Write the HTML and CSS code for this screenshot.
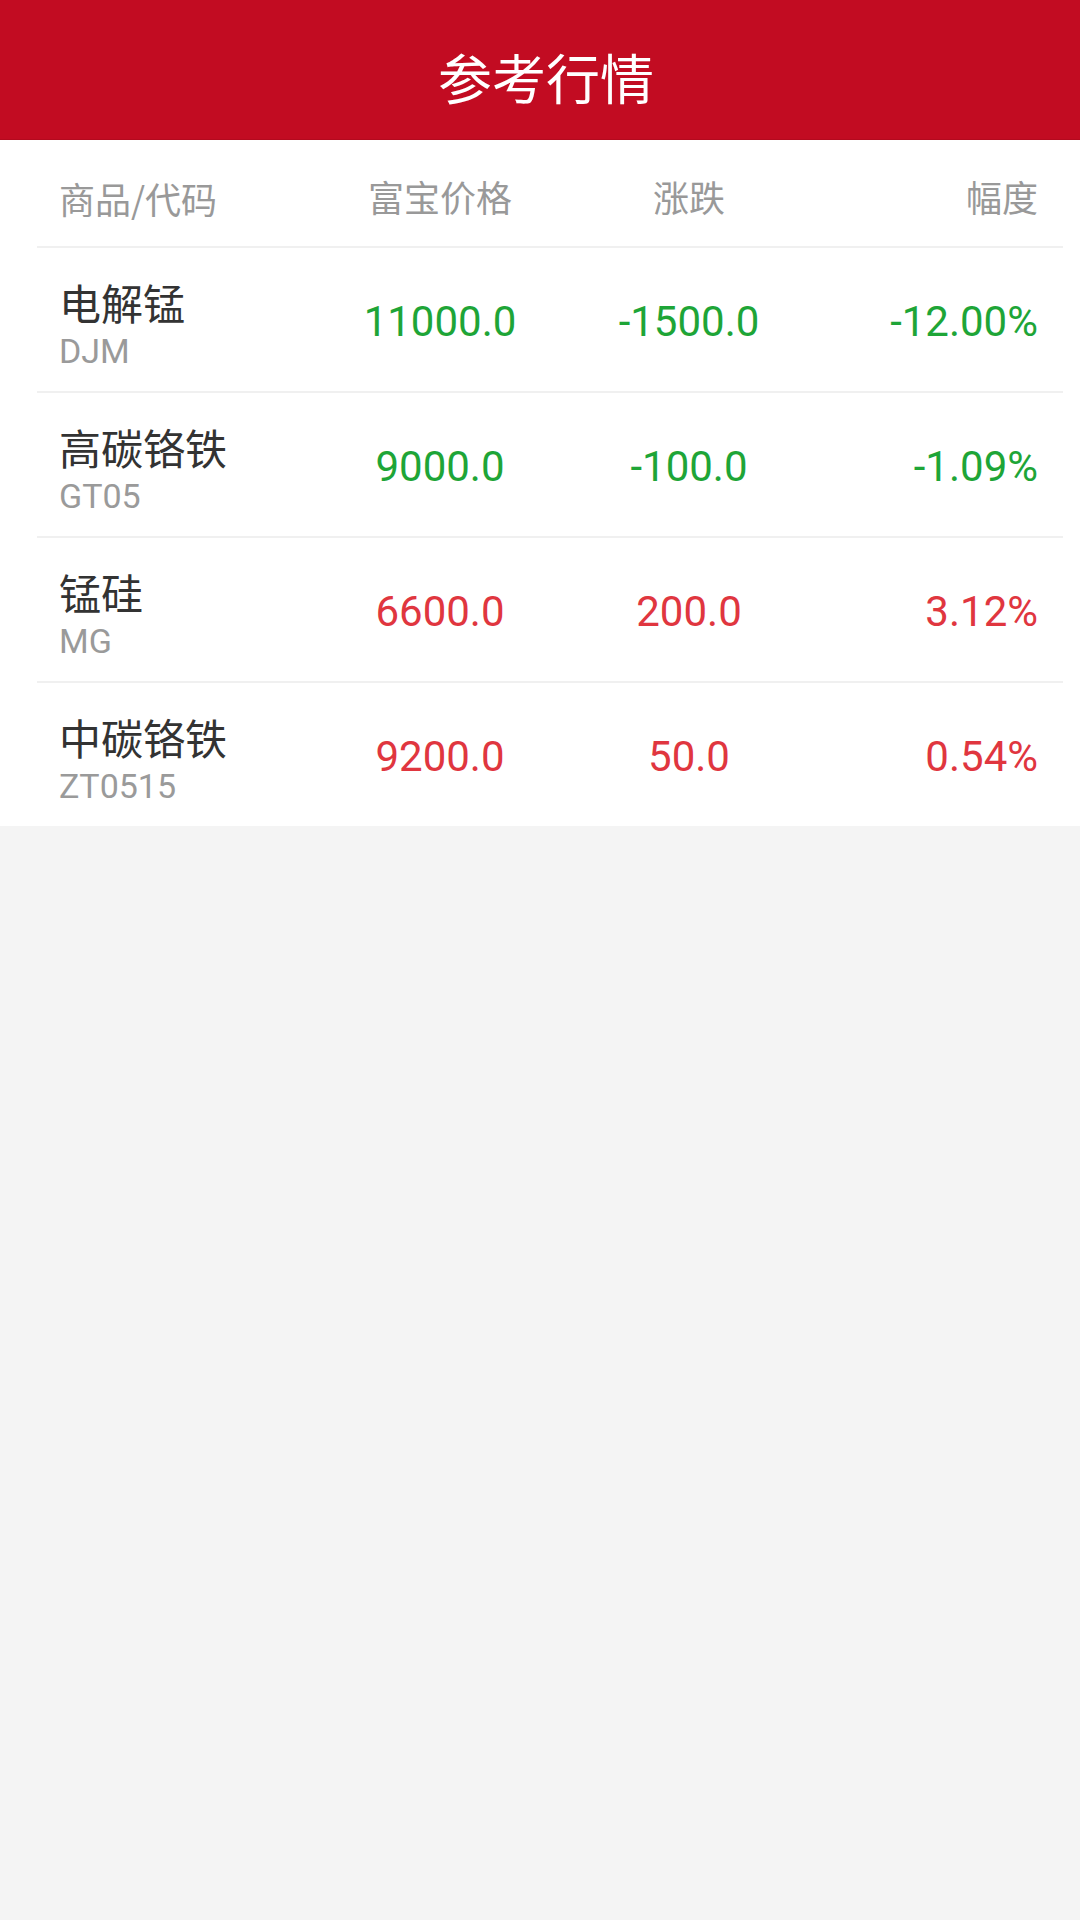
FILE: index.html
```html
<!doctype html>
<html lang="zh-CN">
  <head>
    <meta charset="utf-8">
    <meta name="viewport" content="width=device-width, initial-scale=1">
    <title>参考行情</title>
    <link rel="stylesheet" href="styles.css">
  </head>
  <body>
    <header class="topbar">
      <h1 class="topbar-title">参考行情</h1>
    </header>

    <main class="quotes">
      <div class="quote-row quote-head">
        <div class="col-name">商品/代码</div>
        <div class="col-price">富宝价格</div>
        <div class="col-change">涨跌</div>
        <div class="col-pct">幅度</div>
      </div>

      <div class="quote-row down">
        <div class="col-name">
          <div class="name">电解锰</div>
          <div class="code">DJM</div>
        </div>
        <div class="col-price num">11000.0</div>
        <div class="col-change num">-1500.0</div>
        <div class="col-pct num">-12.00%</div>
      </div>

      <div class="quote-row down">
        <div class="col-name">
          <div class="name">高碳铬铁</div>
          <div class="code">GT05</div>
        </div>
        <div class="col-price num">9000.0</div>
        <div class="col-change num">-100.0</div>
        <div class="col-pct num">-1.09%</div>
      </div>

      <div class="quote-row up">
        <div class="col-name">
          <div class="name">锰硅</div>
          <div class="code">MG</div>
        </div>
        <div class="col-price num">6600.0</div>
        <div class="col-change num">200.0</div>
        <div class="col-pct num">3.12%</div>
      </div>

      <div class="quote-row up last">
        <div class="col-name">
          <div class="name">中碳铬铁</div>
          <div class="code">ZT0515</div>
        </div>
        <div class="col-price num">9200.0</div>
        <div class="col-change num">50.0</div>
        <div class="col-pct num">0.54%</div>
      </div>
    </main>
  </body>
</html>
```

FILE: styles.css
```css
body {
  margin: 0;
  background: #f4f4f4;
  font-family: Roboto, "Noto Sans CJK SC", sans-serif;
}
.topbar {
  height: 140px;
  background: #c20c22;
  border-bottom: 1px solid #b30a1e;
  box-sizing: border-box;
  display: flex;
  align-items: center;
  justify-content: center;
}
.topbar-title {
  margin: 0;
  padding: 14px 0 0 12px;
  color: #fff;
  font-family: "Noto Sans CJK SC", sans-serif;
  font-size: 54px;
  font-weight: 400;
  line-height: 1;
}
.quotes {
  background: #fff;
  padding: 0 17px 0 37px;
}
.quote-row {
  display: grid;
  grid-template-columns: 240px 282px 216px 1fr;
  align-items: center;
  padding: 0 25px 0 22px;
  height: 143px;
  border-bottom: 2px solid #f0f0f0;
}
.quote-row.last {
  border-bottom: none;
}
.quote-head {
  height: 108px;
  padding-top: 5px;
  box-sizing: border-box;
  color: #999;
  font-family: "Noto Sans CJK SC", sans-serif;
  font-size: 36px;
}
.col-price,
.col-change {
  text-align: center;
}
.col-pct {
  text-align: right;
}
.col-name {
  padding-top: 4px;
}
.name {
  color: #333;
  font-family: "Noto Sans CJK SC", sans-serif;
  font-size: 42px;
  line-height: 58px;
}
.code {
  color: #9a9a9a;
  font-family: Roboto, sans-serif;
  font-size: 34px;
  line-height: 40px;
}
.num {
  padding-top: 4px;
  font-family: Roboto, sans-serif;
  font-size: 42px;
}
.down .num {
  color: #1ea537;
}
.up .num {
  color: #e0363f;
}
```
